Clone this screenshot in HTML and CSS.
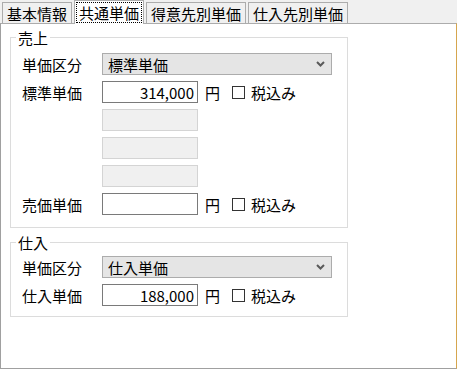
FILE: index.html
```html
<!DOCTYPE html>
<html lang="ja">
<head>
	<meta charset="UTF-8">
	<title>共通単価</title>
	<link rel="stylesheet" href="styles.css">
</head>
<body>
	<div class="window">
		<div class="tabs">
			<span class="tab">基本情報</span>
			<span class="tab tab-on"><span class="focus">共通単価</span></span>
			<span class="tab">得意先別単価</span>
			<span class="tab">仕入先別単価</span>
		</div>
		<div class="panel">
			<fieldset class="group">
				<legend>売上</legend>
				<div class="rows">
					<span class="lbl">単価区分</span>
					<div class="combo">標準単価<svg width="9" height="6" viewBox="0 0 9 6"><polyline points="1,1 4.5,4.5 8,1" fill="none" stroke="#5a5a5a" stroke-width="2"/></svg></div>

					<span class="lbl">標準単価</span>
					<div class="price">
						<input class="num" type="text" value="314,000">
						<span class="yen">円</span>
						<input class="chk" type="checkbox">
						<span>税込み</span>
					</div>

					<span></span>
					<div class="price"><input class="num" type="text" disabled></div>
					<span></span>
					<div class="price"><input class="num" type="text" disabled></div>
					<span></span>
					<div class="price"><input class="num" type="text" disabled></div>

					<span class="lbl">売価単価</span>
					<div class="price">
						<input class="num" type="text" value="">
						<span class="yen">円</span>
						<input class="chk" type="checkbox">
						<span>税込み</span>
					</div>
				</div>
			</fieldset>

			<fieldset class="group group-buy">
				<legend>仕入</legend>
				<div class="rows">
					<span class="lbl">単価区分</span>
					<div class="combo">仕入単価<svg width="9" height="6" viewBox="0 0 9 6"><polyline points="1,1 4.5,4.5 8,1" fill="none" stroke="#5a5a5a" stroke-width="2"/></svg></div>

					<span class="lbl">仕入単価</span>
					<div class="price">
						<input class="num" type="text" value="188,000">
						<span class="yen">円</span>
						<input class="chk" type="checkbox">
						<span>税込み</span>
					</div>
				</div>
			</fieldset>
		</div>
	</div>
</body>
</html>
```

FILE: styles.css
```css
body {
	margin: 0;
	background: #f0f0f0;
	font-family: "Noto Sans CJK JP", "Liberation Sans", sans-serif;
	font-size: 15px;
	color: #000;
}
.window {
	display: flex;
	flex-direction: column;
	width: 457px;
	height: 369px;
}
.tabs {
	display: flex;
	align-items: flex-end;
	gap: 2px;
	height: 23px;
	padding-left: 2px;
}
.tab {
	display: flex;
	align-items: center;
	height: 21px;
	padding: 0 4px;
	border: 1px solid #acacac;
	border-bottom: none;
	box-sizing: border-box;
	background: #f0f0f0;
	line-height: 15px;
}
.tab-on {
	position: relative;
	z-index: 1;
	height: 24px;
	margin: 0 0 -1px;
	padding: 0 1px;
	background: #fff;
}
.focus {
	padding: 2px 2px;
	border: 1px dotted #000;
}
.panel {
	flex: 1;
	padding: 6px 0 0 10px;
	border-top: 1px solid #acacac;
	border-left: 1px solid #a0a0a0;
	border-right: 1px solid #d6a64e;
	border-bottom: 1px solid #a0a0a0;
	background: #fff;
}
.group {
	width: 338px;
	box-sizing: border-box;
	margin: 0 0 7px -1px;
	padding: 0;
	border: 1px solid #dcdcdc;
}
.group legend {
	margin-left: 5px;
	padding: 0 2px;
	line-height: 15px;
}
.rows {
	display: grid;
	grid-template-columns: 80px 230px;
	grid-auto-rows: 22px;
	row-gap: 6px;
	align-items: center;
	padding: 8px 0 12px 11px;
}
.group-buy .rows {
	padding: 6px 0 10px 11px;
}
.combo {
	display: flex;
	align-items: center;
	justify-content: space-between;
	height: 22px;
	padding: 0 6px 0 5px;
	border: 1px solid #acacac;
	box-sizing: border-box;
	background: #e5e5e5;
}
.price {
	display: flex;
	align-items: center;
	height: 22px;
}
.num {
	width: 96px;
	height: 22px;
	margin: 0;
	padding: 0 3px;
	border: 1px solid #7a7a7a;
	box-sizing: border-box;
	font: inherit;
	text-align: right;
	background: #fff;
	outline: none;
}
.num:disabled {
	border-color: #d4d4d4;
	background: #f0f0f0;
}
.yen {
	margin: 0 12px 0 7px;
}
.chk {
	appearance: none;
	width: 13px;
	height: 13px;
	margin: 0 6px 0 0;
	border: 1px solid #333;
	box-sizing: border-box;
	background: #fff;
}
```
